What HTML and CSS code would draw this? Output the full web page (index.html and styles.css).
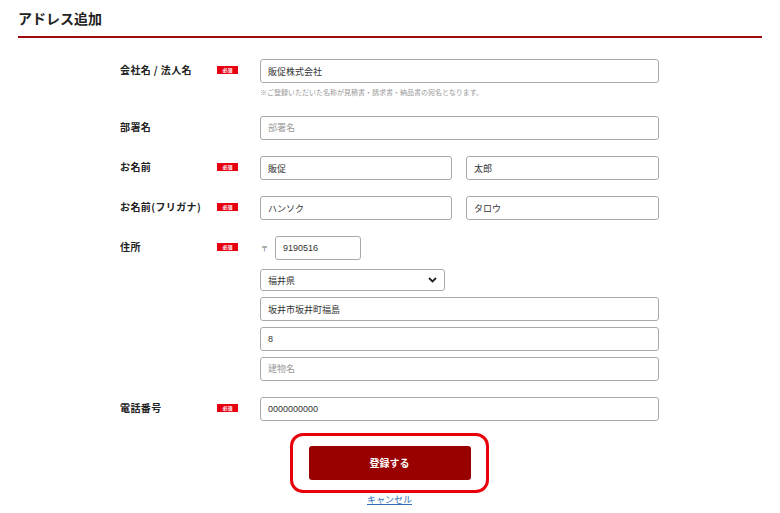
FILE: index.html
```html
<!DOCTYPE html>
<html lang="ja">
<head>
<meta charset="utf-8">
<title>アドレス追加</title>
<link rel="stylesheet" href="styles.css">
</head>
<body>
<h1 class="page-title">アドレス追加</h1>
<form class="form">
  <div class="row row-note">
    <div class="label">会社名 / 法人名</div>
    <div class="req"><span class="badge">必須</span></div>
    <div class="field">
      <input class="input" type="text" value="販促株式会社">
      <p class="note">※ご登録いただいた名称が見積書・請求書・納品書の宛名となります。</p>
    </div>
  </div>
  <div class="row">
    <div class="label">部署名</div>
    <div class="req"></div>
    <div class="field"><input class="input" type="text" placeholder="部署名"></div>
  </div>
  <div class="row">
    <div class="label">お名前</div>
    <div class="req"><span class="badge">必須</span></div>
    <div class="field pair">
      <input class="input" type="text" value="販促">
      <input class="input" type="text" value="太郎">
    </div>
  </div>
  <div class="row">
    <div class="label">お名前(フリガナ)</div>
    <div class="req"><span class="badge">必須</span></div>
    <div class="field pair">
      <input class="input" type="text" value="ハンソク">
      <input class="input" type="text" value="タロウ">
    </div>
  </div>
  <div class="row">
    <div class="label">住所</div>
    <div class="req"><span class="badge">必須</span></div>
    <div class="field stack">
      <div class="zip-line">
        <span class="zip-mark">〒</span>
        <input class="input zip" type="text" value="9190516">
      </div>
      <div class="select-wrap">
        <select class="select"><option>福井県</option></select>
        <svg class="chev" width="9" height="6" viewBox="0 0 9 6"><path d="M1 1l3.5 3.5L8 1" fill="none" stroke="#222" stroke-width="1.8"/></svg>
      </div>
      <input class="input" type="text" value="坂井市坂井町福島">
      <input class="input gap6" type="text" value="8">
      <input class="input gap6" type="text" placeholder="建物名">
    </div>
  </div>
  <div class="row row-last">
    <div class="label">電話番号</div>
    <div class="req"><span class="badge">必須</span></div>
    <div class="field"><input class="input" type="text" value="0000000000"></div>
  </div>
  <div class="actions">
    <div class="highlight"><button class="submit" type="button">登録する</button></div>
    <a class="cancel" href="#">キャンセル</a>
  </div>
</form>
</body>
</html>
```

FILE: styles.css
```css
* { box-sizing: border-box; }
body {
  margin: 0;
  background: #fff;
  color: #333;
  font-family: "Noto Sans CJK JP", "Noto Sans", sans-serif;
}
.page-title {
  margin: 0 18px;
  padding: 8px 0 8px;
  font-size: 14px;
  line-height: 20px;
  font-weight: 700;
  color: #222;
  border-bottom: 2px solid #9e0b0f;
}
.form {
  width: 539px;
  margin: 21px 0 0 120px;
}
.row {
  display: grid;
  grid-template-columns: 97px 43px 399px;
  margin-bottom: 16px;
}
.row-last { margin-bottom: 12px; }
.label {
  font-size: 10px;
  font-weight: 700;
  line-height: 14px;
  padding-top: 4px;
  letter-spacing: 0.4px;
  color: #222;
}
.req { padding-top: 7px; }
.badge {
  display: flex;
  align-items: center;
  justify-content: center;
  width: 21px;
  height: 8px;
  background: #e60012;
  color: #fff;
  font-size: 5px;
  font-weight: 700;
  line-height: 8px;
}
.input {
  display: block;
  width: 100%;
  height: 24px;
  padding: 0 7px;
  border: 1px solid #a9a9a9;
  border-radius: 3px;
  font-family: "Liberation Sans", "Noto Sans CJK JP", sans-serif;
  font-size: 9px;
  color: #333;
  background: #fff;
}
.input::placeholder { color: #999; }
.note {
  margin: 4px 0 3px;
  font-size: 7px;
  line-height: 10px;
  color: #999;
}
.pair {
  display: grid;
  grid-template-columns: 192px 193px;
  column-gap: 14px;
}
.stack { display: flex; flex-direction: column; }
.zip-line { display: flex; align-items: center; }
.zip-mark {
  width: 15px;
  padding-left: 1px;
  font-size: 7px;
  color: #666;
}
.zip { width: 86px; }
.select-wrap {
  position: relative;
  width: 185px;
  margin-top: 9px;
  margin-bottom: 6px;
}
.select {
  display: block;
  width: 100%;
  height: 22px;
  padding: 0 7px;
  border: 1px solid #a9a9a9;
  border-radius: 3px;
  background: #fff;
  font-family: "Noto Sans CJK JP", sans-serif;
  font-size: 9px;
  color: #333;
  -webkit-appearance: none;
  appearance: none;
}
.chev {
  position: absolute;
  right: 8px;
  top: 8px;
}
.gap6 { margin-top: 6px; }
.actions {
  display: flex;
  flex-direction: column;
  align-items: center;
}
.highlight {
  width: 199px;
  height: 60px;
  border: 3.5px solid #e8000b;
  border-radius: 13px;
  padding: 9.5px 14.5px 0 15.5px;
}
.submit {
  display: block;
  width: 162px;
  height: 34px;
  border: 0;
  border-radius: 3px;
  background: #990000;
  color: #fff;
  font-family: "Noto Sans CJK JP", sans-serif;
  font-size: 10px;
  font-weight: 700;
}
.cancel {
  margin-top: 1px;
  font-size: 9px;
  line-height: 12px;
  color: #2f6fb5;
  text-decoration: underline;
}
```
